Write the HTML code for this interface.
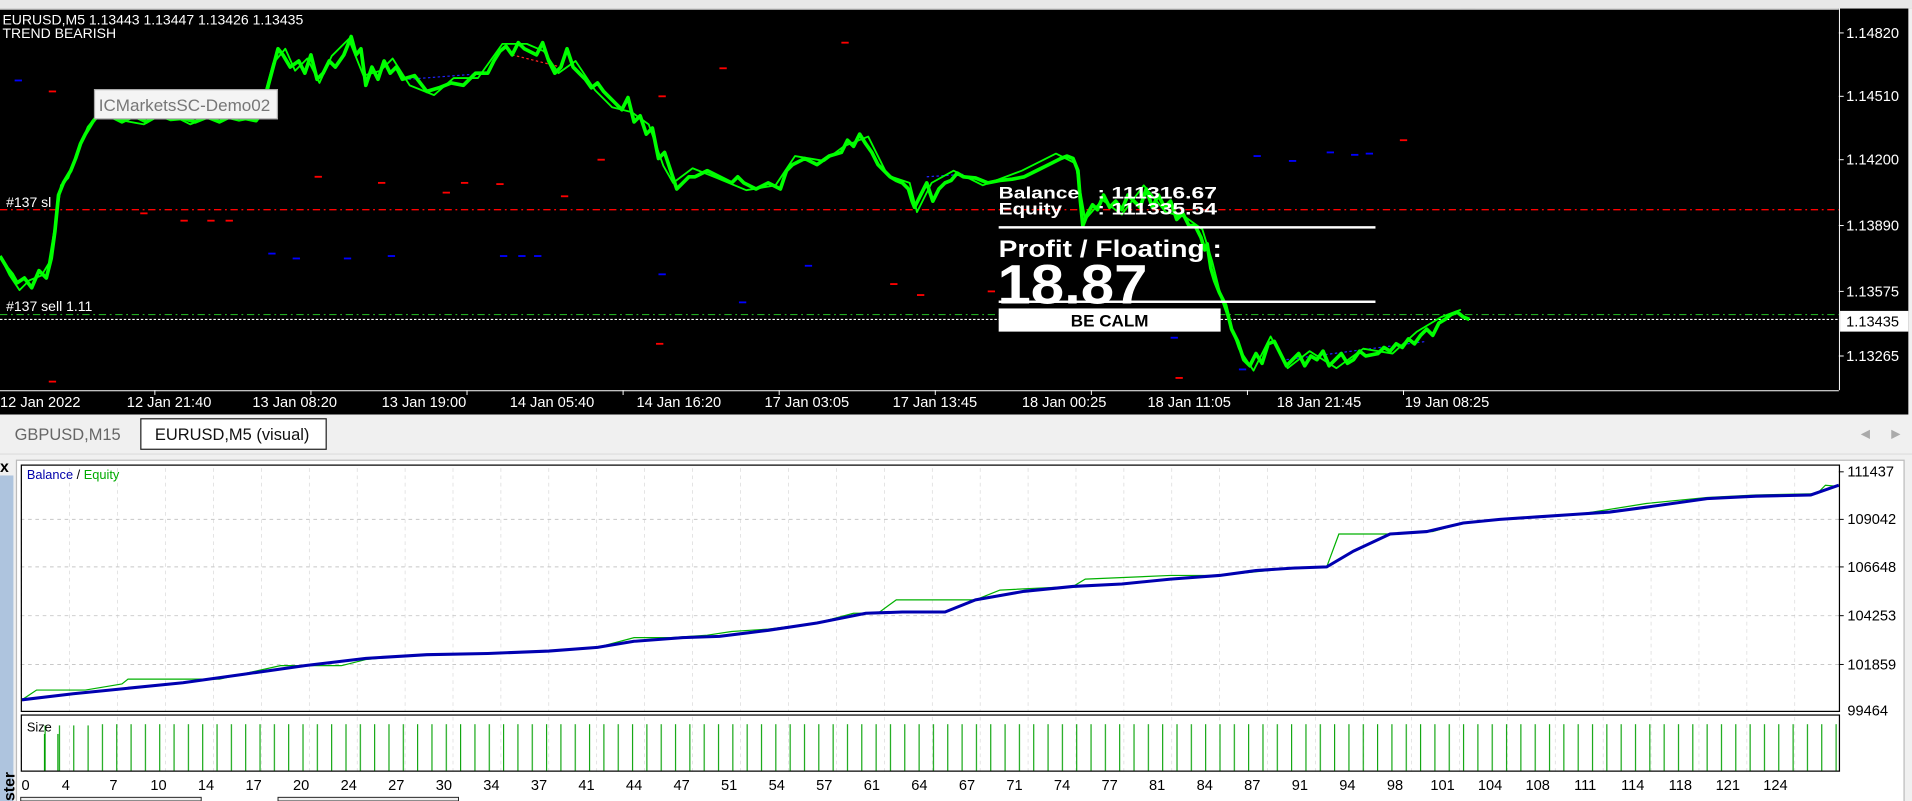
<!DOCTYPE html>
<html><head><meta charset="utf-8"><style>
html,body{margin:0;padding:0;background:#f0f0f0;overflow:hidden}
svg{display:block}
text{font-family:"Liberation Sans",sans-serif}
</style></head><body>
<svg width="1912" height="801" viewBox="0 0 1568 657" preserveAspectRatio="none" xmlns="http://www.w3.org/2000/svg">
<defs>
<pattern id="bars" x="36.5" y="0" width="11.75" height="657" patternUnits="userSpaceOnUse">
<line x1="0.5" y1="0" x2="0.5" y2="657" stroke="#00a000" stroke-width="0.9"/>
</pattern>
<pattern id="vg" x="18" y="0" width="39.3" height="657" patternUnits="userSpaceOnUse">
<line x1="39.3" y1="0" x2="39.3" y2="657" stroke="#c8c8c8" stroke-width="0.8" stroke-dasharray="3,3"/>
</pattern>
</defs>
<rect x="0" y="0" width="1568" height="7" fill="#e8e8e8"/>
<polygon points="1198,7 1210,7 1204,13" fill="#7a8aa0"/>
<rect x="0" y="7" width="1568" height="333" fill="#000"/>
<rect x="1565" y="7" width="3" height="333" fill="#f0f0f0"/>
<line x1="0" y1="7.5" x2="1508" y2="7.5" stroke="#fff" stroke-width="0.8"/>
<line x1="1508.5" y1="7" x2="1508.5" y2="320" stroke="#fff" stroke-width="0.8"/>
<line x1="0" y1="320.5" x2="1508" y2="320.5" stroke="#fff" stroke-width="0.8"/>
<g stroke="#fff" stroke-width="0.8">
<line x1="1508" y1="27" x2="1512" y2="27"/><line x1="1508" y1="79" x2="1512" y2="79"/><line x1="1508" y1="131" x2="1512" y2="131"/><line x1="1508" y1="185" x2="1512" y2="185"/><line x1="1508" y1="239" x2="1512" y2="239"/><line x1="1508" y1="292" x2="1512" y2="292"/>
<line x1="127" y1="320" x2="127" y2="324"/><line x1="255" y1="320" x2="255" y2="324"/><line x1="383" y1="320" x2="383" y2="324"/><line x1="511" y1="320" x2="511" y2="324"/><line x1="639" y1="320" x2="639" y2="324"/><line x1="767" y1="320" x2="767" y2="324"/><line x1="895" y1="320" x2="895" y2="324"/><line x1="1023" y1="320" x2="1023" y2="324"/><line x1="1151" y1="320" x2="1151" y2="324"/>
</g>
<g fill="#fff" font-size="12">
<text x="1514" y="31">1.14820</text><text x="1514" y="83">1.14510</text><text x="1514" y="135">1.14200</text><text x="1514" y="189">1.13890</text><text x="1514" y="243">1.13575</text><text x="1514" y="296">1.13265</text>
<text x="0" y="334">12 Jan 2022</text><text x="104" y="334">12 Jan 21:40</text><text x="207" y="334">13 Jan 08:20</text><text x="313" y="334">13 Jan 19:00</text><text x="418" y="334">14 Jan 05:40</text><text x="522" y="334">14 Jan 16:20</text><text x="627" y="334">17 Jan 03:05</text><text x="732" y="334">17 Jan 13:45</text><text x="838" y="334">18 Jan 00:25</text><text x="941" y="334">18 Jan 11:05</text><text x="1047" y="334">18 Jan 21:45</text><text x="1152" y="334">19 Jan 08:25</text>
</g>
<rect x="1509" y="255" width="56" height="17" fill="#fff"/>
<text x="1514" y="268" font-size="12" fill="#000">1.13435</text>
<line x1="0" y1="172" x2="1508" y2="172" stroke="#f00" stroke-width="1.2" stroke-dasharray="6,3,1.5,3"/>
<line x1="0" y1="258" x2="1508" y2="258" stroke="#2a2" stroke-width="1" stroke-dasharray="6,3,1.5,3"/>
<line x1="0" y1="262" x2="1508" y2="262" stroke="#fff" stroke-width="1" stroke-dasharray="2,1.5"/>
<g fill="#fff" font-size="11.5"><text x="5" y="170">#137 sl</text><text x="5" y="255">#137 sell 1.11</text>
<text x="2" y="20">EURUSD,M5  1.13443 1.13447 1.13426 1.13435</text><text x="2" y="31">TREND BEARISH</text></g>
<g stroke-width="1.5">
<g stroke="#f00"><line x1="40" y1="75" x2="46" y2="75"/><line x1="115" y1="175" x2="121" y2="175"/><line x1="148" y1="181" x2="154" y2="181"/><line x1="170" y1="181" x2="176" y2="181"/><line x1="185" y1="181" x2="191" y2="181"/><line x1="258" y1="145" x2="264" y2="145"/><line x1="310" y1="150" x2="316" y2="150"/><line x1="363" y1="158" x2="369" y2="158"/><line x1="378" y1="150" x2="384" y2="150"/><line x1="407" y1="151" x2="413" y2="151"/><line x1="460" y1="161" x2="466" y2="161"/><line x1="490" y1="131" x2="496" y2="131"/><line x1="540" y1="79" x2="546" y2="79"/><line x1="590" y1="56" x2="596" y2="56"/><line x1="690" y1="35" x2="696" y2="35"/><line x1="730" y1="233" x2="736" y2="233"/><line x1="752" y1="242" x2="758" y2="242"/><line x1="810" y1="239" x2="816" y2="239"/><line x1="964" y1="310" x2="970" y2="310"/><line x1="1148" y1="115" x2="1154" y2="115"/><line x1="40" y1="313" x2="46" y2="313"/><line x1="538" y1="282" x2="544" y2="282"/></g>
<g stroke="#00f"><line x1="12" y1="66" x2="18" y2="66"/><line x1="220" y1="208" x2="226" y2="208"/><line x1="240" y1="212" x2="246" y2="212"/><line x1="282" y1="212" x2="288" y2="212"/><line x1="318" y1="210" x2="324" y2="210"/><line x1="410" y1="210" x2="416" y2="210"/><line x1="425" y1="210" x2="431" y2="210"/><line x1="438" y1="210" x2="444" y2="210"/><line x1="540" y1="225" x2="546" y2="225"/><line x1="606" y1="248" x2="612" y2="248"/><line x1="660" y1="218" x2="666" y2="218"/><line x1="1028" y1="128" x2="1034" y2="128"/><line x1="1057" y1="132" x2="1063" y2="132"/><line x1="1088" y1="125" x2="1094" y2="125"/><line x1="1108" y1="127" x2="1114" y2="127"/><line x1="1120" y1="126" x2="1126" y2="126"/><line x1="960" y1="277" x2="966" y2="277"/><line x1="1016" y1="303" x2="1022" y2="303"/></g>
</g>
<polyline points="215,92 228,40" stroke="#22f" stroke-width="1" fill="none" stroke-dasharray="2,2"/>
<polyline points="335,65 400,60" stroke="#22f" stroke-width="1" fill="none" stroke-dasharray="2,2"/>
<polyline points="420,45 460,55" stroke="#f22" stroke-width="1" fill="none" stroke-dasharray="2,2"/>
<polyline points="760,145 790,143" stroke="#22f" stroke-width="1" fill="none" stroke-dasharray="2,2"/>
<polyline points="1055,295 1170,280" stroke="#22f" stroke-width="1" fill="none" stroke-dasharray="2,2"/>
<g fill="none" stroke="#00ff00" stroke-linejoin="round">
<polyline stroke-width="3" points="0,210 6,220 10,225 14,232 20,228 26,236 32,222 38,228 42,212 45,190 48,160 52,150 58,140 62,130 66,118 70,110 76,100 80,95 85,90 92,96 100,100 110,95 120,100 130,94 140,98 150,97 160,100 170,96 180,100 190,95 200,97 210,99 215,92 220,70 228,40 232,45 238,55 245,50 250,60 255,45 260,65 265,60 270,50 275,55 282,45 288,30 292,45 296,40 300,70 305,55 310,65 315,50 320,60 325,55 330,65 340,62 350,75 360,72 370,68 380,70 390,60 400,60 405,50 410,42 415,38 420,45 425,35 430,40 440,45 445,35 450,50 455,60 460,55 465,40 470,55 475,60 480,65 485,72 490,68 495,75 500,80 505,85 510,90 515,80 520,100 525,95 530,110 535,105 540,130 545,125 550,140 555,155 560,150 565,145 570,145 580,140 590,145 600,150 605,145 610,150 620,155 630,150 640,155 645,140 650,135 660,130 670,135 680,128 690,125 695,115 700,120 705,110 710,118 715,125 720,135 725,140 730,145 735,148 740,150 745,155 748,165 750,170 755,160 760,150 765,165 770,155 775,150 780,148 785,142 790,145 800,146 810,150 820,148 830,147 840,145 850,140 860,135 870,130 875,128 880,130 884,140 886,165 888,185 892,175 896,168 900,172 905,160 910,170 915,165 920,172 925,160 930,165 935,170 940,155 945,170 950,160 955,170 960,165 965,180 970,175 975,185 980,185 985,195 988,205 990,200 993,220 996,230 1000,240 1005,250 1008,262 1010,270 1015,280 1020,295 1025,300 1030,290 1035,298 1040,282 1045,280 1050,290 1055,300 1060,295 1065,290 1070,300 1075,292 1080,295 1085,288 1090,300 1095,295 1100,290 1105,298 1110,295 1115,288 1120,292 1130,290 1135,285 1140,288 1145,282 1150,285 1155,278 1160,282 1165,275 1170,270 1175,275 1180,265 1185,262 1190,258 1195,256 1200,260 1205,262"/>
<polyline stroke-width="1.5" points="2,214 8,226 16,238 24,230 34,226 40,216 46,180 50,152 56,146 64,124 72,104 82,92 96,98 118,102 136,92 156,102 176,94 196,99 212,96 224,52 234,40 242,58 252,48 262,68 272,46 286,32 298,62 312,58 322,48 336,70 356,78 372,64 392,64 412,36 432,36 446,42 458,60 472,50 488,74 502,88 518,92 532,102 544,136 552,150 568,138 588,146 612,156 636,152 652,128 676,132 692,120 712,112 728,144 746,150 752,174 764,150 782,140 806,152 838,140 866,126 882,134 890,180 904,164 920,176 938,152 956,174 972,178 986,188 994,214 1002,246 1016,286 1028,304 1042,276 1056,302 1074,288 1096,302 1118,286 1142,290 1162,272 1182,260 1198,254"/>
</g>
<rect x="77.5" y="73.5" width="150" height="24" fill="#f4f4f4" stroke="#aaa"/>
<text x="81" y="91" font-size="14" fill="#777">ICMarketsSC-Demo02</text>
<g fill="#fff" font-weight="bold">
<text x="819" y="163" font-size="14" textLength="66" lengthAdjust="spacingAndGlyphs">Balance</text><text x="900" y="163" font-size="14" textLength="98" lengthAdjust="spacingAndGlyphs">:  111316.67</text>
<text x="819" y="176" font-size="14" textLength="52" lengthAdjust="spacingAndGlyphs">Equity</text><text x="900" y="176" font-size="14" textLength="98" lengthAdjust="spacingAndGlyphs">:  111335.54</text>
<text x="819" y="211" font-size="20" textLength="183" lengthAdjust="spacingAndGlyphs">Profit / Floating  :</text>
<text x="818" y="249" font-size="46" textLength="123" lengthAdjust="spacingAndGlyphs">18.87</text>
</g>
<rect x="819" y="185.5" width="309" height="2" fill="#fff"/>
<rect x="819" y="246.5" width="309" height="2" fill="#fff"/>
<rect x="819" y="253" width="182" height="19" fill="#fff"/>
<text x="910" y="268" font-size="14" font-weight="bold" fill="#000" text-anchor="middle">BE CALM</text>
<rect x="0" y="340" width="1568" height="32" fill="#f0f0f0"/>
<text x="12" y="361" font-size="13.5" fill="#666">GBPUSD,M15</text>
<rect x="115.5" y="343.5" width="152" height="25" fill="#fff" stroke="#222"/>
<text x="127" y="361" font-size="13.5" fill="#111">EURUSD,M5 (visual)</text>
<text x="1526" y="359" font-size="10" fill="#aaa">◀</text><text x="1551" y="359" font-size="10" fill="#aaa">▶</text>
<line x1="0" y1="372.5" x2="1568" y2="372.5" stroke="#ddd"/>
<rect x="0" y="373" width="1568" height="284" fill="#f0f0f0"/>
<text x="0" y="387" font-size="13" font-weight="bold" fill="#000">x</text>
<rect x="0" y="390" width="11" height="267" fill="#aec4de"/>
<text transform="translate(12,657) rotate(-90)" font-size="13" font-weight="bold" fill="#000">ster</text>
<rect x="13.5" y="377.5" width="1548" height="280" fill="#fff" stroke="#bbb"/>
<rect x="17" y="381" width="1491" height="202" fill="url(#vg)"/>
<rect x="17" y="587" width="1491" height="46" fill="url(#vg)"/>
<g stroke="#c8c8c8" stroke-width="0.8" stroke-dasharray="3,3">
<line x1="17" y1="426" x2="1508" y2="426"/><line x1="17" y1="465" x2="1508" y2="465"/><line x1="17" y1="505" x2="1508" y2="505"/><line x1="17" y1="545" x2="1508" y2="545"/>
</g>
<rect x="36" y="594" width="1471" height="38" fill="url(#bars)"/>
<rect x="36" y="587" width="40" height="8" fill="#fff"/>
<line x1="36.5" y1="602" x2="36.5" y2="632" stroke="#00a000"/>
<line x1="47.5" y1="602" x2="47.5" y2="632" stroke="#00a000"/>
<rect x="17.5" y="381.5" width="1491" height="202" fill="none" stroke="#000" stroke-width="1"/>
<rect x="17.5" y="586.5" width="1491" height="46" fill="none" stroke="#000" stroke-width="1"/>
<g stroke="#000" stroke-width="0.8"><line x1="1508" y1="387" x2="1512" y2="387"/><line x1="1508" y1="426" x2="1512" y2="426"/><line x1="1508" y1="465" x2="1512" y2="465"/><line x1="1508" y1="505" x2="1512" y2="505"/><line x1="1508" y1="545" x2="1512" y2="545"/></g>
<g font-size="12" fill="#000">
<text x="1515" y="391">111437</text><text x="1515" y="430">109042</text><text x="1515" y="469">106648</text><text x="1515" y="509">104253</text><text x="1515" y="549">101859</text><text x="1515" y="587">99464</text>
</g>
<text x="22" y="393" font-size="10.5"><tspan fill="#00a">Balance</tspan><tspan fill="#000"> / </tspan><tspan fill="#0a0">Equity</tspan></text>
<text x="22" y="600" font-size="10.5" fill="#000">Size</text>
<polyline fill="none" stroke="#00b000" stroke-width="1" points="18,574 30,566 70,566 100,561 105,557 160,557 180,557 230,546 280,546 300,541 330,538 400,536 450,534 490,531 520,523 550,523 580,521 600,518 630,516 670,511 700,503 720,503 735,492 800,492 820,484 880,481 890,475 960,472 1000,472 1030,469 1060,466 1088,465 1098,438 1145,438 1175,436 1200,429 1240,425 1300,421 1350,413 1400,408 1440,406 1490,405 1497,398 1508,399"/>
<polyline fill="none" stroke="#0000b0" stroke-width="2.5" points="18,574 60,569 100,565 150,560 200,553 250,546 300,540 350,537 400,536 450,534 490,531 520,526 560,523 590,522 630,517 670,511 710,503 740,502 775,502 800,492 840,485 880,481 920,479 960,475 1000,472 1030,468 1060,466 1088,465 1110,452 1140,438 1170,436 1200,429 1230,426 1260,424 1290,422 1320,420 1350,416 1400,409 1440,407 1485,406 1508,398"/>
<g font-size="12" fill="#000" text-anchor="middle">
<text x="21" y="648">0</text><text x="54" y="648">4</text><text x="93" y="648">7</text><text x="130" y="648">10</text><text x="169" y="648">14</text><text x="208" y="648">17</text><text x="247" y="648">20</text><text x="286" y="648">24</text><text x="325" y="648">27</text><text x="364" y="648">30</text><text x="403" y="648">34</text><text x="442" y="648">37</text><text x="481" y="648">41</text><text x="520" y="648">44</text><text x="559" y="648">47</text><text x="598" y="648">51</text><text x="637" y="648">54</text><text x="676" y="648">57</text><text x="715" y="648">61</text><text x="754" y="648">64</text><text x="793" y="648">67</text><text x="832" y="648">71</text><text x="871" y="648">74</text><text x="910" y="648">77</text><text x="949" y="648">81</text><text x="988" y="648">84</text><text x="1027" y="648">87</text><text x="1066" y="648">91</text><text x="1105" y="648">94</text><text x="1144" y="648">98</text><text x="1183" y="648">101</text><text x="1222" y="648">104</text><text x="1261" y="648">108</text><text x="1300" y="648">111</text><text x="1339" y="648">114</text><text x="1378" y="648">118</text><text x="1417" y="648">121</text><text x="1456" y="648">124</text>
</g>
<rect x="17" y="654" width="148" height="3" fill="#f0f0f0" stroke="#222" stroke-width="0.8"/>
<rect x="228" y="654" width="148" height="3" fill="#f0f0f0" stroke="#222" stroke-width="0.8"/>
</svg>
</body></html>
